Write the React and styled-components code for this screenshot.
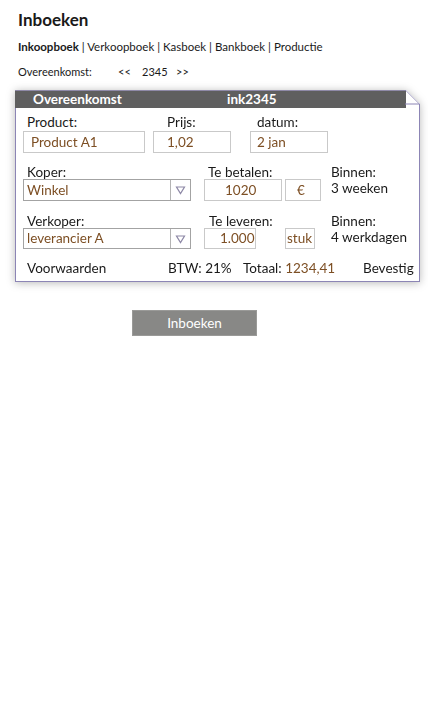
import React from "react";
import styled, { createGlobalStyle } from "styled-components";

const GlobalStyle = createGlobalStyle`
  body {
    margin: 0;
    background: #ffffff;
  }
`;

const Page = styled.div`
  font-family: Lato, "Liberation Sans", sans-serif;
  color: #1a1a1a;
  padding-top: 10px;
`;

const Title = styled.h1`
  margin: 0 0 0 18px;
  font-size: 17px;
  line-height: 20px;
  font-weight: 700;
`;

const Tabs = styled.div`
  margin: 10px 0 0 18px;
  font-size: 11.5px;
  line-height: 14px;
  .active {
    font-weight: 700;
  }
`;

const Nav = styled.div`
  display: flex;
  margin: 11px 0 0 18px;
  font-size: 11px;
  line-height: 14px;
`;

const NavItem = styled.span`
  width: ${(p) => p.$w}px;
`;

const CardShadow = styled.div`
  margin: 11px 0 0 15px;
  width: 405px;
  filter: drop-shadow(0 1px 4px rgba(0, 0, 0, 0.28));
`;

const Card = styled.div`
  position: relative;
  background: #ffffff;
  clip-path: polygon(0 0, calc(100% - 14px) 0, 100% 14px, 100% 100%, 0 100%);
`;

const Header = styled.div`
  display: flex;
  height: 18px;
  margin-right: 14px;
  background: #5f5f5f;
  border-top: 1px solid #8f8aa8;
  box-sizing: border-box;
  color: #ffffff;
  font-weight: 700;
  font-size: 13.5px;
  line-height: 17px;
  padding-left: 18px;
`;

const HeaderCell = styled.span`
  width: ${(p) => p.$w}px;
`;

const Corner = styled.svg`
  position: absolute;
  top: 0;
  right: 0;
`;

const Body = styled.div`
  border: 1px solid #8c85b5;
  border-top: none;
  padding: 7px 0 5px 6px;
  height: 174px;
  box-sizing: border-box;
  display: flex;
  flex-direction: column;
`;

const Row = styled.div`
  display: flex;
  margin-top: ${(p) => p.$top || 0}px;
`;

const Col = styled.div`
  width: ${(p) => p.$w}px;
  margin-left: ${(p) => p.$ml || 0}px;
  flex-shrink: 0;
`;

const Label = styled.div`
  font-size: 13.5px;
  line-height: 15px;
  height: 15px;
  padding-left: ${(p) => p.$indent || 0}px;
  margin-bottom: ${(p) => p.$after ?? 1}px;
  white-space: nowrap;
`;

const Plain = styled.div`
  font-size: 13.5px;
  line-height: 15px;
  margin-top: 1px;
  white-space: nowrap;
`;

const Input = styled.div`
  box-sizing: border-box;
  height: ${(p) => p.$h || 22}px;
  border: 1px solid #c9c9c9;
  color: #7d4f24;
  font-size: 13.5px;
  line-height: ${(p) => (p.$h || 22) - 2}px;
  padding-left: ${(p) => p.$pad || 0}px;
  white-space: nowrap;
  overflow: hidden;
`;

const Select = styled.div`
  box-sizing: border-box;
  display: flex;
  height: ${(p) => p.$h || 22}px;
  border: 1px solid #a3a3a3;
  color: #7d4f24;
  font-size: 13.5px;
  line-height: ${(p) => (p.$h || 22) - 2}px;
`;

const SelectText = styled.span`
  flex: 1;
  padding-left: 3px;
`;

const Arrow = styled.span`
  width: 19px;
  border-left: 1px solid #b4b4b4;
  display: flex;
  align-items: center;
  justify-content: center;
`;

const Footer = styled.div`
  display: flex;
  margin-top: auto;
  padding-left: 5px;
  font-size: 13.5px;
  line-height: 15px;
`;

const FooterItem = styled.span`
  width: ${(p) => p.$w}px;
  white-space: nowrap;
  b {
    font-weight: 400;
    color: #7d4f24;
  }
`;

const Action = styled.button`
  display: block;
  margin: 28px 0 0 132px;
  width: 125px;
  height: 26px;
  border: 1px solid #9a9a98;
  background: #888886;
  color: #ffffff;
  font-family: Lato, "Liberation Sans", sans-serif;
  font-size: 13.5px;
  padding: 0;
`;

function Triangle() {
  return (
    <svg width="11" height="10" viewBox="0 0 11 10">
      <polygon points="1.5,2 9.5,2 5.5,8.5" fill="none" stroke="#8d88a6" strokeWidth="1.2" />
    </svg>
  );
}

export default function App() {
  return (
    <Page>
      <GlobalStyle />
      <Title>Inboeken</Title>
      <Tabs>
        <span className="active">Inkoopboek</span> | Verkoopboek | Kasboek | Bankboek | Productie
      </Tabs>
      <Nav>
        <NavItem $w={100}>Overeenkomst:</NavItem>
        <NavItem $w={24}>&lt;&lt;</NavItem>
        <NavItem $w={34}>2345</NavItem>
        <NavItem $w={20}>&gt;&gt;</NavItem>
      </Nav>

      <CardShadow>
        <Card>
          <Header>
            <HeaderCell $w={194}>Overeenkomst</HeaderCell>
            <HeaderCell>ink2345</HeaderCell>
          </Header>
          <Corner width="15" height="19" viewBox="0 0 15 19">
            <line x1="0.5" y1="0" x2="14.5" y2="14" stroke="#8c85b5" strokeWidth="1" />
            <line x1="0" y1="14" x2="15" y2="14" stroke="#8c85b5" strokeWidth="1" />
            <line x1="14.5" y1="14" x2="14.5" y2="19" stroke="#8c85b5" strokeWidth="1" />
          </Corner>
          <Body>
            <Row>
              <Col $w={122} $ml={1}>
                <Label $indent={4}>Product:</Label>
                <Input $pad={7}>Product A1</Input>
              </Col>
              <Col $w={78} $ml={8}>
                <Label $indent={14}>Prijs:</Label>
                <Input $pad={13}>1,02</Input>
              </Col>
              <Col $w={78} $ml={19}>
                <Label $indent={7}>datum:</Label>
                <Input $pad={6}>2 jan</Input>
              </Col>
            </Row>

            <Row $top={12}>
              <Col $w={168} $ml={1}>
                <Label $indent={4} $after={-1}>Koper:</Label>
                <Select>
                  <SelectText>Winkel</SelectText>
                  <Arrow>
                    <Triangle />
                  </Arrow>
                </Select>
              </Col>
              <Col $w={78} $ml={13}>
                <Label $indent={4} $after={-1}>Te betalen:</Label>
                <Input $pad={20}>1020</Input>
              </Col>
              <Col $w={36} $ml={3}>
                <Label $after={-1} />
                <Input $pad={11}>€</Input>
              </Col>
              <Col $w={90} $ml={10}>
                <Label $after={0}>Binnen:</Label>
                <Plain>3 weeken</Plain>
              </Col>
            </Row>

            <Row $top={13}>
              <Col $w={168} $ml={1}>
                <Label $indent={4} $after={-1}>Verkoper:</Label>
                <Select $h={21}>
                  <SelectText>leverancier A</SelectText>
                  <Arrow>
                    <Triangle />
                  </Arrow>
                </Select>
              </Col>
              <Col $w={52} $ml={13}>
                <Label $indent={5} $after={-1}>Te leveren:</Label>
                <Input $h={21} $pad={15}>1.000</Input>
              </Col>
              <Col $w={30} $ml={29}>
                <Label $after={-1} />
                <Input $h={21} $pad={1}>stuk</Input>
              </Col>
              <Col $w={90} $ml={16}>
                <Label $after={0}>Binnen:</Label>
                <Plain>4 werkdagen</Plain>
              </Col>
            </Row>

            <Footer>
              <FooterItem $w={141}>Voorwaarden</FooterItem>
              <FooterItem $w={75}>BTW: 21%</FooterItem>
              <FooterItem $w={120}>
                Totaal: <b>1234,41</b>
              </FooterItem>
              <FooterItem>Bevestig</FooterItem>
            </Footer>
          </Body>
        </Card>
      </CardShadow>

      <Action>Inboeken</Action>
    </Page>
  );
}
